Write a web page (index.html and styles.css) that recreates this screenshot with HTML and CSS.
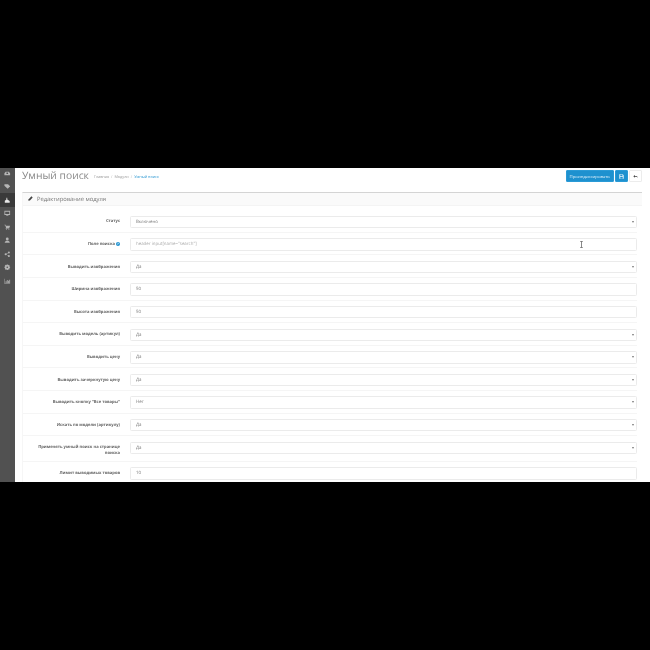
FILE: index.html
```html
<!DOCTYPE html>
<html lang="en">
<head>
    <meta charset="UTF-8">
    <title>Умный поиск</title>
    <link rel="stylesheet" href="styles.css">
</head>
<body>
    <div class="screen">
        <nav class="sidebar">
            <div class="nav-item"><svg viewBox="0 0 16 16"><path d="M1 13V8l3-4h8l3 4v5zM6 6v4h4V6z"/></svg></div>
            <div class="nav-item"><svg viewBox="0 0 16 16"><path d="M1 3h7l6 6-5 5-8-7zM10 3l5 5-1 2-6-7z"/></svg></div>
            <div class="nav-item active"><svg viewBox="0 0 16 16"><path d="M6 2h2v4l6 4v4H2v-5l4-3z"/></svg></div>
            <div class="nav-item"><svg viewBox="0 0 16 16"><path d="M1 2h14v10H9v1h2v1H5v-1h2v-1H1zM3 4v6h10V4z"/></svg></div>
            <div class="nav-item"><svg viewBox="0 0 16 16"><path d="M1 2h3l1 2h10l-2 6H6l-.5 1H13v1H4l1-3-2-6H1z"/><circle cx="6" cy="14" r="1.3"/><circle cx="12" cy="14" r="1.3"/></svg></div>
            <div class="nav-item"><svg viewBox="0 0 16 16"><circle cx="8" cy="5" r="3.5"/><path d="M2 14v-2l3-3h6l3 3v2z"/></svg></div>
            <div class="nav-item"><svg viewBox="0 0 16 16"><circle cx="12" cy="3.5" r="2.5"/><circle cx="12" cy="12.5" r="2.5"/><circle cx="4" cy="8" r="2.5"/><path d="M4 7.500l8-4.500v1L5 8l7 4v1l-8-4.500z"/></svg></div>
            <div class="nav-item"><svg viewBox="0 0 16 16"><path fill-rule="evenodd" d="M6.500 1h3l.5 2 2-1 2 2-1 2 2 .5v3l-2 .5 1 2-2 2-2-1-.5 2h-3l-.5-2-2 1-2-2 1-2-2-.5v-3l2-.5-1-2 2-2 2 1zM8 6a2 2 0 1 0 0 4 2 2 0 0 0 0-4z"/></svg></div>
            <div class="nav-item"><svg viewBox="0 0 16 16"><path d="M1 2h1v11h13v1H1zM4 8h2v4H4zM7 5h2v7H7zM10 7h2v5h-2zM13 4h2v8h-2z"/></svg></div>
        </nav>
        <main class="content">
            <header class="page-header">
                <h1>Умный поиск</h1>
                <ul class="breadcrumb">
                    <li>Главная</li>
                    <li>Модули</li>
                    <li class="current">Умный поиск</li>
                </ul>
                <div class="actions">
                    <button class="btn btn-primary btn-wide">Проиндексировать</button>
                    <button class="btn btn-primary"><svg viewBox="0 0 16 16"><path fill-rule="evenodd" d="M1 1h11l3 3v11H1zM4 2v4h7V2zM4 9v5h8V9z"/></svg></button>
                    <button class="btn btn-default"><svg viewBox="0 0 16 16"><path d="M6 3v3h4c3 0 5 2 5 7-1-3-3-4-5-4H6v3L1 7.500z"/></svg></button>
                </div>
            </header>
            <section class="panel">
                <div class="panel-heading">
                    <svg viewBox="0 0 16 16"><path d="M11 1l4 4-9 9-5 1 1-5z"/></svg>
                    <span>Редактирование модуля</span>
                </div>
                <form class="form">
                    <div class="row"><label>Статус</label><div class="control select">Включено</div></div>
                    <div class="row">
                        <label>Поле поиска <span class="help">?</span></label>
                        <div class="control placeholder">header input[name="search"]</div>
                    </div>
                    <div class="row"><label>Выводить изображения</label><div class="control select">Да</div></div>
                    <div class="row"><label>Ширина изображения</label><div class="control">50</div></div>
                    <div class="row"><label>Высота изображения</label><div class="control">50</div></div>
                    <div class="row"><label>Выводить модель (артикул)</label><div class="control select">Да</div></div>
                    <div class="row"><label>Выводить цену</label><div class="control select">Да</div></div>
                    <div class="row"><label>Выводить зачеркнутую цену</label><div class="control select">Да</div></div>
                    <div class="row"><label>Выводить кнопку "Все товары"</label><div class="control select">Нет</div></div>
                    <div class="row"><label>Искать по модели (артикулу)</label><div class="control select">Да</div></div>
                    <div class="row row-tall"><label>Применять умный поиск на странице поиска</label><div class="control select">Да</div></div>
                    <div class="row"><label>Лимит выводимых товаров</label><div class="control">10</div></div>
                </form>
            </section>
            <svg class="text-cursor" viewBox="0 0 6 10"><path d="M1 .5h4M3 .5v9M1 9.500h4" fill="none" stroke="#555" stroke-width="1"/></svg>
        </main>
    </div>
</body>
</html>
```

FILE: styles.css
```css
* {
    margin: 0;
    padding: 0;
    box-sizing: border-box;
}

body {
    background: #000;
    font-family: "Open Sans", sans-serif;
    color: #666;
    text-rendering: geometricPrecision;
}

/* the shot is a scaled-down capture, so everything is a little soft */
.screen {
    display: flex;
    margin-top: 168px;
    height: 314px;
    overflow: hidden;
    background: #fff;
    filter: blur(0.3px);
}

.sidebar {
    width: 15px;
    flex-shrink: 0;
    background: #515151;
}

.nav-item {
    display: flex;
    align-items: center;
    justify-content: center;
    height: 13.500px;
}

.nav-item:first-child {
    margin-top: -1.750px;
}

.nav-item svg {
    width: 6.500px;
    height: 6.500px;
    fill: #b5b5b5;
}

.nav-item.active {
    background: #3a3a3a;
}

.nav-item.active svg {
    fill: #e6e6e6;
}

.content {
    position: relative;
    flex: 1;
    padding: 0 8px 0 7px;
}

.page-header {
    display: flex;
    align-items: center;
    height: 16px;
    margin-bottom: 7.700px;
}

h1 {
    font-size: 10.300px;
    font-weight: 400;
    color: #888;
    margin-right: 5px;
}

.breadcrumb {
    display: flex;
    list-style: none;
    font-size: 3.800px;
    color: #999;
    padding-top: 3px;
}

.breadcrumb li + li::before {
    content: "/";
    margin: 0 2px;
    color: #bbb;
}

.breadcrumb .current {
    color: #1e91cf;
}

.breadcrumb .current::before {
    color: #bbb;
}

.actions {
    display: flex;
    gap: 1px;
    margin-left: auto;
    padding-top: 0.500px;
}

.btn {
    display: flex;
    align-items: center;
    justify-content: center;
    width: 13px;
    height: 12px;
    border: 1px solid;
    border-radius: 1px;
    font-family: inherit;
    font-size: 4.300px;
}

.btn svg {
    width: 5px;
    height: 5px;
}

.btn-wide {
    width: 48.500px;
}

.btn-primary {
    background: #1e91cf;
    color: #e8f4fb;
    border-color: #2a9ad6;
}

.btn-primary svg {
    fill: #e8f4fb;
}

.btn-default {
    background: #fff;
    border-color: #ececec;
}

.btn-default svg {
    fill: #444;
}

.panel {
    border-top: 1px solid #d4d4d4;
    border-left: 1px solid #f6f6f6;
}

.panel-heading {
    display: flex;
    align-items: center;
    gap: 4px;
    height: 13.500px;
    padding-left: 5px;
    background: #fafafa;
    border-bottom: 1px solid #f4f4f4;
    font-size: 5.800px;
    color: #777;
}

.panel-heading svg {
    width: 5px;
    height: 5px;
    fill: #444;
}

.form {
    padding: 4px 5.500px 0 0;
}

.row {
    display: flex;
    align-items: flex-start;
    height: 22.600px;
    padding-top: 5.500px;
    border-bottom: 1px solid #f5f5f5;
}

.row-tall {
    height: 25.600px;
}

.row label {
    width: 97px;
    margin-right: 10px;
    padding: 3.750px 0 0 10px;
    flex-shrink: 0;
    text-align: right;
    font-size: 4.100px;
    line-height: 6px;
    font-weight: 700;
    color: #666;
}

.help {
    display: inline-block;
    width: 4px;
    height: 4px;
    border-radius: 50%;
    background: #1e91cf;
    color: #fff;
    font-size: 3px;
    line-height: 4px;
    text-align: center;
    vertical-align: middle;
}

.control {
    position: relative;
    flex: 1;
    height: 12.300px;
    padding-left: 5px;
    line-height: 10.500px;
    border: 1px solid #ebebeb;
    border-radius: 1.500px;
    background: #fff;
    font-size: 4.400px;
    color: #777;
}

.control.placeholder {
    color: #aaa;
}

.control.select::after {
    content: "";
    position: absolute;
    right: 1.500px;
    top: 4px;
    border-left: 1.500px solid transparent;
    border-right: 1.500px solid transparent;
    border-top: 2px solid #777;
}

.text-cursor {
    position: absolute;
    left: 564px;
    top: 72.500px;
    width: 5px;
    height: 7px;
}
```
